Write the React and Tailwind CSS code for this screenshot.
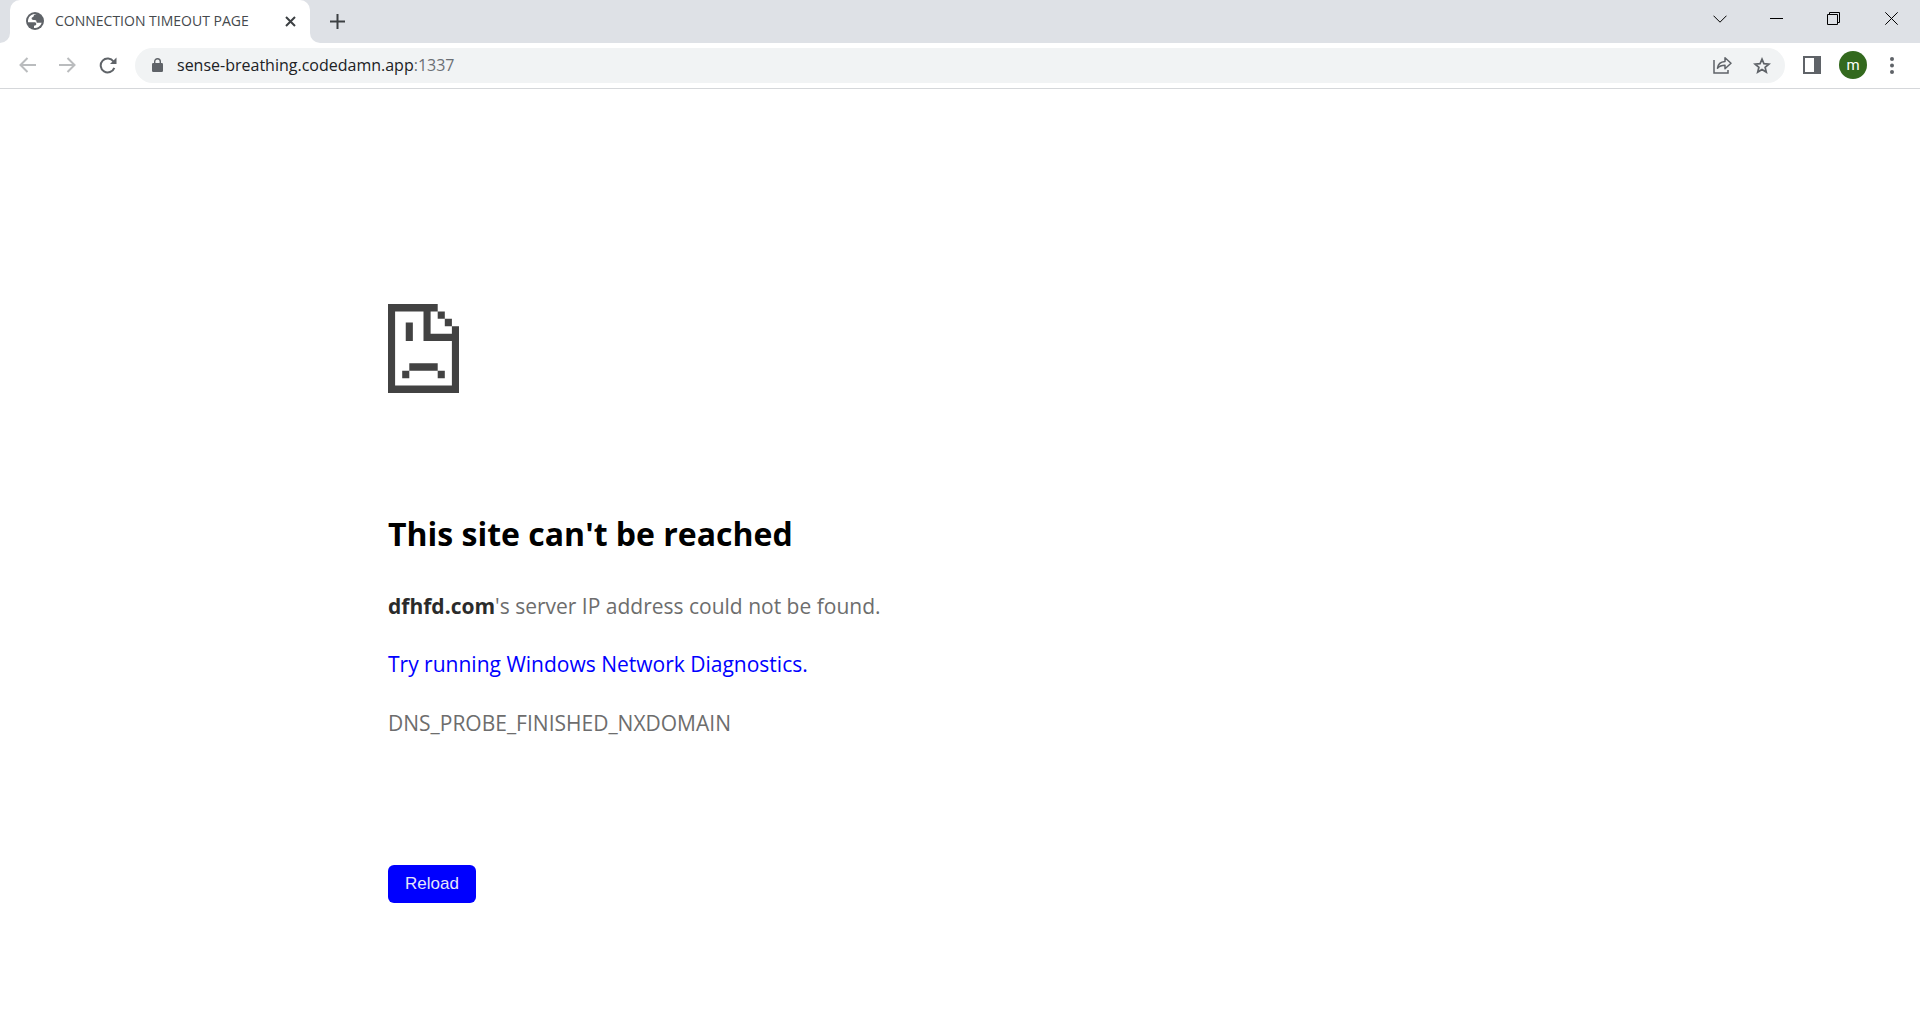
import React from "react";

function IconButton({ label, className = "", children }) {
  return (
    <button
      type="button"
      aria-label={label}
      className={`flex shrink-0 items-center justify-center ${className}`}
    >
      {children}
    </button>
  );
}

function WindowControls() {
  return (
    <div className="ml-auto flex h-[30px] text-black">
      <IconButton label="Search tabs" className="w-[57px] pt-[7px]">
        <svg width="14" height="8" viewBox="0 0 14 8" fill="none" stroke="currentColor">
          <path d="M.5 .7 7 7.2 13.5 .7" />
        </svg>
      </IconButton>
      <IconButton label="Minimize" className="w-[57px] pt-[7px]">
        <svg width="13" height="1" viewBox="0 0 13 1">
          <rect width="13" height="1" fill="currentColor" />
        </svg>
      </IconButton>
      <IconButton label="Restore" className="w-[57px] pt-[7px]">
        <svg width="13" height="13" viewBox="0 0 13 13" fill="none" stroke="currentColor">
          <path d="M.5 2.5h10v10H.5zM2.500 2.500V.5h10v10h-2" />
        </svg>
      </IconButton>
      <IconButton label="Close" className="w-[58px] pt-[7px]">
        <svg width="13" height="13" viewBox="0 0 13 13" fill="none" stroke="currentColor">
          <path d="M.3 .3 12.700 12.700M12.700 .3 .3 12.700" />
        </svg>
      </IconButton>
    </div>
  );
}

function GlobeIcon() {
  return (
    <svg width="18" height="18" viewBox="0 0 18 18" aria-hidden="true">
      <circle cx="9" cy="9" r="9" fill="#5f6368" />
      <path
        d="M10.500 2.200c-2.200 0-2.800.8-2.800 1.900 0 1.500-2.100.8-2.100 2.400 0 1.400 1.500 1.500 3 1.500 1.700 0 1.900 1 1.900 1.900 0 1.100 1.300.9 2.700.9h2.500A7 7 0 0 1 8 15.900v-2.200c1.400 0 2.300-.6 2.300-1.700 0-1.300-1-1.700-2.500-1.700H2.100a7 7 0 0 1 8.400-8.100z"
        fill="white"
      />
    </svg>
  );
}

function TabStrip() {
  return (
    <header className="flex h-[43px] bg-[#dee1e6]">
      <div className="flex w-[10px] flex-col bg-white">
        <div className="h-full rounded-br-[10px] bg-[#dee1e6]" />
      </div>
      <div className="flex w-[300px] items-center rounded-t-[10px] bg-white pr-[10px] pb-px pl-4">
        <GlobeIcon />
        <span className="ml-[11px] whitespace-nowrap text-sm text-[#45494d]">
          CONNECTION TIMEOUT PAGE
        </span>
        <IconButton label="Close tab" className="ml-auto size-5">
          <svg width="11" height="11" viewBox="0 0 11 11" fill="none" stroke="#3c4043" strokeWidth="2">
            <path d="M1 1 10 10M10 1 1 10" />
          </svg>
        </IconButton>
      </div>
      <div className="bg-white">
        <IconButton label="New tab" className="h-full w-[55px] rounded-bl-[10px] bg-[#dee1e6]">
          <svg width="15" height="15" viewBox="0 0 15 15" fill="none" stroke="#3c4043" strokeWidth="2">
            <path d="M7.500 0v15M0 7.500h15" />
          </svg>
        </IconButton>
      </div>
      <WindowControls />
    </header>
  );
}

function Toolbar() {
  return (
    <div className="flex h-[46px] items-center border-b border-[#d5d7da] bg-white px-2 pb-px text-[#5f6368]">
      <IconButton label="Back" className="size-10 pr-[2px] text-[#babcbe]">
        <svg width="17" height="16" viewBox="0 0 17 16" fill="none" stroke="currentColor" strokeWidth="2">
          <path d="M17 8H2M8.500 1 1.500 8l7 7" />
        </svg>
      </IconButton>
      <IconButton label="Forward" className="size-10 pr-[2px] text-[#babcbe]">
        <svg width="17" height="16" viewBox="0 0 17 16" fill="none" stroke="currentColor" strokeWidth="2">
          <path d="M0 8h15M8.500 1l7 7-7 7" />
        </svg>
      </IconButton>
      <IconButton label="Reload page" className="size-10">
        <svg width="18" height="17" viewBox="0 0 18 17" fill="none">
          <path d="M14.500 4.500A7 7 0 1 0 15.300 10.800" stroke="currentColor" strokeWidth="2" />
          <path d="M17.500 .5V7H11z" fill="currentColor" />
        </svg>
      </IconButton>
      <div className="ml-[7px] flex h-[35px] min-w-0 flex-1 items-center rounded-full bg-[#f1f3f4] pr-[3px] pl-[17px]">
        <svg width="11" height="14" viewBox="0 0 11 14" className="shrink-0" aria-hidden="true">
          <rect y="5" width="11" height="9" rx="1.200" fill="currentColor" />
          <path d="M2.700 5.500V3.500a2.800 2.800 0 0 1 5.600 0v2" fill="none" stroke="currentColor" strokeWidth="1.400" />
        </svg>
        <a href="#top" className="ml-[14px] whitespace-nowrap text-base text-[#202124]">
          sense-breathing.codedamn.app<span className="text-[#6b6f74]">:1337</span>
        </a>
        <IconButton label="Share this page" className="ml-auto size-10">
          <svg width="19" height="18" viewBox="0 0 19 18" fill="none" stroke="currentColor" strokeWidth="1.500">
            <path d="M1 4v13h14v-3" />
            <path d="M4.500 12.200c.5-4.200 3-6.400 7.500-6.700V1.700l6 5.500-6 5.500V9.200c-3.500 0-5.700.8-7.500 3z" strokeLinejoin="round" />
          </svg>
        </IconButton>
        <IconButton label="Bookmark this tab" className="size-10">
          <svg width="18" height="17" viewBox="0 0 18 17" fill="none" stroke="currentColor" strokeWidth="1.700">
            <path d="M9 2.200 10.900 6.700 15.900 7.100 12.100 10.300 13.300 15.100 9 12.500 4.700 15.100 5.900 10.300 2.100 7.100 7.100 6.700Z" />
          </svg>
        </IconButton>
      </div>
      <IconButton label="Side panel" className="ml-[7px] size-10">
        <svg width="18" height="18" viewBox="0 0 18 18" fill="currentColor">
          <path fillRule="evenodd" d="M0 0h18v18H0zM2 2v14h9V2z" />
        </svg>
      </IconButton>
      <button
        type="button"
        aria-label="Profile"
        className="ml-[7px] flex size-7 shrink-0 items-center justify-center rounded-full bg-[#33691e] font-['Roboto',sans-serif] text-[15px] text-white"
      >
        m
      </button>
      <IconButton label="Menu" className="ml-[5px] size-10">
        <svg width="4" height="17" viewBox="0 0 4 17" fill="currentColor">
          <circle cx="2" cy="2" r="2" />
          <circle cx="2" cy="8.500" r="2" />
          <circle cx="2" cy="15" r="2" />
        </svg>
      </IconButton>
    </div>
  );
}

function SadPage() {
  return (
    <svg
      width="71"
      height="89"
      viewBox="0 0 10 12"
      preserveAspectRatio="none"
      fill="#424242"
      role="img"
      aria-label="Page unavailable"
    >
      <path
        fillRule="evenodd"
        d="M0 0H7V1H8V2H9V3H10V12H0ZM1 1V11H9V5H5V1ZM6 1V4H9V3H8V2H7V1Z"
      />
      <path d="M2.500 2.500h1V5h-1zM3 8h4v1H3zM2 9h1v1H2zM7 9h1v1H7z" />
    </svg>
  );
}

export default function App() {
  return (
    <div id="top" className="min-h-screen bg-white font-['Open_Sans','Noto_Sans',sans-serif]">
      <TabStrip />
      <Toolbar />
      <main className="flex flex-col items-start px-97 pt-[215px] text-[21px] leading-[30px] text-[#6d6d6d]">
        <SadPage />
        <h1 className="mt-[118px] text-[32px] leading-[46px] font-bold text-black">
          This site can't be reached
        </h1>
        <p className="mt-[34px]">
          <strong className="text-[#2b2b2b]">dfhfd.com</strong>'s server IP address could not be found.
        </p>
        <a href="#diagnostics" className="mt-7 text-[#0000ff]">
          Try running Windows Network Diagnostics.
        </a>
        <p className="mt-[29px]">DNS_PROBE_FINISHED_NXDOMAIN</p>
        <button
          type="button"
          className="mt-[127px] h-[38px] rounded-md bg-[#0000ff] px-[17px] font-['Liberation_Sans',sans-serif] text-[17px] text-[#e6e6fa]"
        >
          Reload
        </button>
      </main>
    </div>
  );
}
